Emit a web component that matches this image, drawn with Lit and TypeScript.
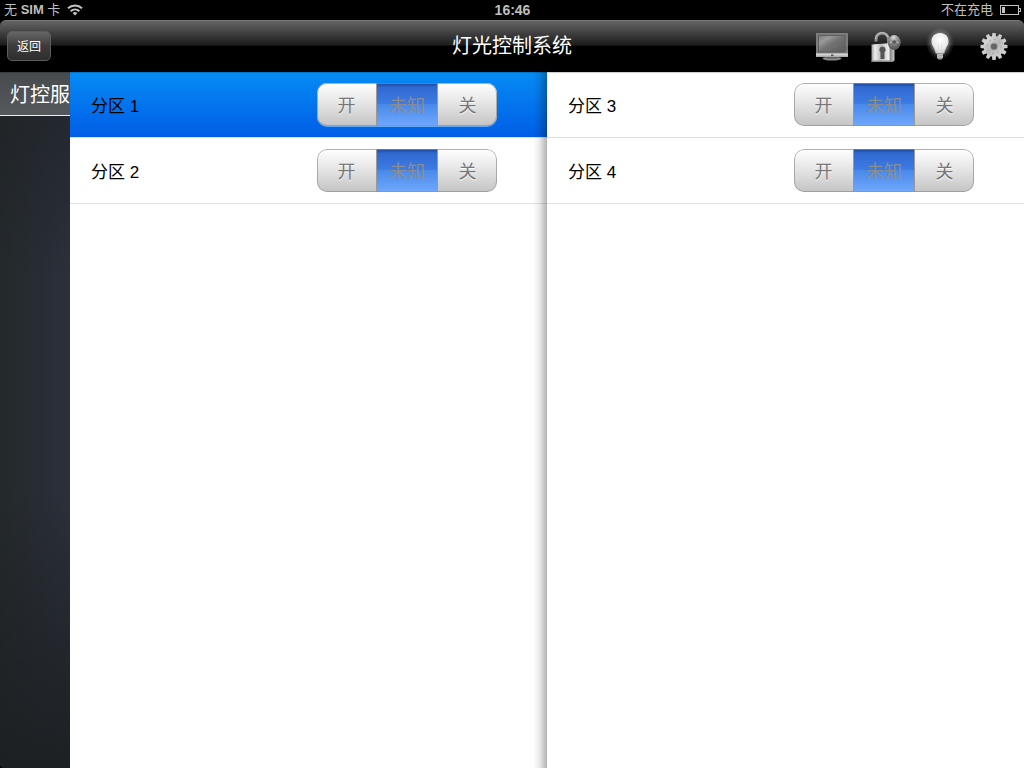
import { LitElement, html, css, svg } from "lit";
import { customElement, property, state } from "lit/decorators.js";
import { classMap } from "lit/directives/class-map.js";

type Mode = "on" | "unknown" | "off";

interface Zone {
  id: number;
  mode: Mode;
}

const MODES: { key: Mode; label: string }[] = [
  { key: "on", label: "开" },
  { key: "unknown", label: "未知" },
  { key: "off", label: "关" },
];

const monitorIcon = svg`
  <defs>
    <linearGradient id="m-screen" x1="0" y1="0" x2="1" y2="1">
      <stop offset="0" stop-color="#7b7b7b" /><stop offset=".25" stop-color="#999" />
      <stop offset=".5" stop-color="#727272" /><stop offset="1" stop-color="#5c5c5c" />
    </linearGradient>
    <linearGradient id="m-bar" x1="0" y1="0" x2="0" y2="1">
      <stop offset="0" stop-color="#e6e6e6" /><stop offset="1" stop-color="#a2a2a2" />
    </linearGradient>
  </defs>
  <ellipse cx="18" cy="30.6" rx="9.5" ry="1.9" fill="#8b8b8b" />
  <path d="M13 28.500h10l1 2h-12z" fill="#5e5e5e" />
  <rect x="2" y="5" width="32" height="24" fill="#7c7c7c" />
  <rect x="4.500" y="7.500" width="26.500" height="16.500" fill="url(#m-screen)" stroke="#5c5c5c" />
  <rect x="32" y="18" width="1" height="4" fill="#626262" />
  <rect x="2" y="25.500" width="32" height="3.500" fill="url(#m-bar)" />
  <rect x="17" y="26.500" width="2.500" height="1.500" fill="#555" />`;

const lockIcon = svg`
  <defs>
    <linearGradient id="l-body" x1="0" y1="0" x2="1" y2="0">
      <stop offset="0" stop-color="#9b9b9b" /><stop offset=".15" stop-color="#eee" />
      <stop offset=".4" stop-color="#bcbcbc" /><stop offset=".75" stop-color="#f0f0f0" />
      <stop offset=".82" stop-color="#8e8e8e" /><stop offset="1" stop-color="#c8c8c8" />
    </linearGradient>
    <radialGradient id="l-ball" cx=".45" cy=".15" r=".8">
      <stop offset="0" stop-color="#dcdcdc" /><stop offset=".4" stop-color="#939393" />
      <stop offset="1" stop-color="#555" />
    </radialGradient>
  </defs>
  <path d="M8 13.500v-2c0-8.500 12-8.500 12.500 0v5" fill="none" stroke="#8d8d8d" stroke-width="3" />
  <path d="M7.500 11c.8-7.500 10.500-8.500 12.500-2" fill="none" stroke="#d2d2d2" stroke-width="1" />
  <path d="M3.500 16.500l20-1.500 3 1.500v16l-2 1.500h-21z" fill="url(#l-body)" />
  <path d="M3.500 32.500h21v1.500h-21z" fill="#8a8a8a" />
  <path d="M14.500 18.500a3.300 3.300 0 0 1 2 5.800v6.700h-4v-6.700a3.300 3.300 0 0 1 2-5.800z" fill="#555" />
  <ellipse cx="26.200" cy="14.500" rx="6.500" ry="7.500" fill="url(#l-ball)" />
  <path d="M22 14.500q4-1.500 8.500 0" fill="none" stroke="#c4c4c4" />
  <ellipse cx="26.200" cy="14" rx="2.200" ry="1.800" fill="#5b5b5b" />`;

const bulbIcon = svg`
  <defs>
    <radialGradient id="b-glow">
      <stop offset=".45" stop-color="#fff" stop-opacity=".55" />
      <stop offset=".75" stop-color="#fff" stop-opacity=".15" />
      <stop offset="1" stop-color="#fff" stop-opacity="0" />
    </radialGradient>
    <radialGradient id="b-glass" cx=".5" cy=".35" r=".7">
      <stop offset="0" stop-color="#fff" /><stop offset=".6" stop-color="#ebebeb" />
      <stop offset="1" stop-color="#c4c4c4" />
    </radialGradient>
  </defs>
  <ellipse cx="18" cy="15.500" rx="14" ry="16" fill="url(#b-glow)" />
  <path d="M18 5c5.200 0 8.500 3.600 8.500 8.200 0 4.600-3.500 6.300-4.200 12.300h-8.600c-.7-6-4.200-7.700-4.200-12.300C9.500 8.600 12.800 5 18 5z" fill="url(#b-glass)" />
  <path d="M16 15.500l1 9.500m3-9.500L19 25" fill="none" stroke="#d8d8d8" stroke-width=".8" />
  <path d="M15 25.500h6v4.500l-1.500 1.500h-3L15 30z" fill="#999" />
  <path d="M15 27.200l6-.7m-6 2.800l6-.7" stroke="#e0e0e0" stroke-width=".8" />`;

const gearIcon = svg`
  <defs>
    <linearGradient id="g-face" x1="0" y1="0" x2="1" y2="1">
      <stop offset="0" stop-color="#e6e6e6" /><stop offset=".5" stop-color="#b8b8b8" />
      <stop offset="1" stop-color="#d8d8d8" />
    </linearGradient>
  </defs>
  ${Array.from({ length: 12 }, (_, i) => svg`
    <path d="M16.400 5h3.200l.7 5h-4.600z" fill="#cdcdcd" transform="rotate(${i * 30} 18 18.500)" />`)}
  <circle cx="18" cy="18.500" r="10.400" fill="url(#g-face)" />
  <circle cx="18" cy="18.500" r="7" fill="none" stroke="#a4a4a4" stroke-width="1" stroke-dasharray="2 3.500" />
  <circle cx="18" cy="18.500" r="4" fill="#a8a8a8" />
  <circle cx="18" cy="18.500" r="3.100" fill="#666" />`;

@customElement("zone-row")
export class ZoneRow extends LitElement {
  @property({ type: Object }) zone!: Zone;
  @property({ type: Boolean, reflect: true }) selected = false;
  @state() private mode: Mode = "unknown";

  static styles = css`
    :host {
      display: flex;
      align-items: center;
      justify-content: space-between;
      box-sizing: border-box;
      height: 66px;
      padding: 0 50px 0 21px;
      border-bottom: 1px solid #e0e0e0;
      background: #fff;
      color: #000;
    }
    :host([selected]) {
      background: linear-gradient(#058cf5, #015de6);
    }
    .name {
      padding-top: 4px;
      font-size: 17px;
      line-height: 24px;
    }
    .segments {
      display: grid;
      grid-template-columns: 59px 62px 59px;
      box-sizing: border-box;
      width: 180px;
      height: 43px;
      border-radius: 10px;
      overflow: hidden;
      position: relative;
      background: linear-gradient(#fff, #e6e6e6 45%, #c4c4c4);
    }
    .segments::after {
      content: "";
      position: absolute;
      inset: 0;
      border: 1px solid #8e8e8eb0;
      border-radius: 10px;
      pointer-events: none;
    }
    :host([selected]) .segments {
      box-shadow: 0 1px 0 #69a8ef;
    }
    .segment {
      margin: 0;
      padding: 0 0 2px;
      border: 0;
      background: none;
      font: inherit;
      font-size: 18px;
      color: #777;
      text-shadow: 0 1px 0 #fff;
    }
    .segment.active {
      border-left: 1px solid #999;
      border-right: 1px solid #999;
      background: linear-gradient(#18469a, #3069d0 10%, #3d7de6 50%, #4989ea 50%, #70a9fc);
      color: #8a8c90;
      text-shadow: none;
    }
  `;

  willUpdate(changed: Map<string, unknown>) {
    if (changed.has("zone")) this.mode = this.zone.mode;
  }

  render() {
    return html`
      <span class="name">分区 ${this.zone.id}</span>
      <div class="segments" role="group" aria-label="分区 ${this.zone.id}">
        ${MODES.map(
          (m) => html`<button
            type="button"
            class=${classMap({ segment: true, active: m.key === this.mode })}
            aria-pressed=${m.key === this.mode}
            @click=${() => (this.mode = m.key)}
          >${m.label}</button>`
        )}
      </div>
    `;
  }
}

@customElement("app-root")
export class AppRoot extends LitElement {
  @state() private selected = 1;

  private columns: Zone[][] = [
    [{ id: 1, mode: "unknown" }, { id: 2, mode: "unknown" }],
    [{ id: 3, mode: "unknown" }, { id: 4, mode: "unknown" }],
  ];

  static styles = css`
    :host {
      display: flex;
      flex-direction: column;
      min-height: 100vh;
      background: #000;
      font-family: "Liberation Sans", "Noto Sans CJK SC", sans-serif;
    }
    .status {
      display: grid;
      grid-template-columns: 1fr auto 1fr;
      align-items: center;
      height: 20px;
      padding: 0 3px 0 4px;
      color: #bfbfbf;
      font-size: 13px;
      line-height: 18px;
    }
    .carrier,
    .power {
      display: flex;
      align-items: center;
      gap: 7px;
    }
    .power {
      justify-content: flex-end;
    }
    .time {
      font-size: 14px;
      font-weight: bold;
    }
    .bar {
      display: grid;
      grid-template-columns: 1fr auto 1fr;
      align-items: center;
      box-sizing: border-box;
      height: 52px;
      padding: 0 3px 2px;
      border-top: 1px solid #777;
      border-radius: 6px 6px 0 0;
      background: linear-gradient(#646464, #1c1c1c 47%, #000 50%);
      box-shadow: 0 1px 1px #0003;
      position: relative;
      z-index: 1;
    }
    .back {
      justify-self: start;
      box-sizing: border-box;
      width: 44px;
      height: 30px;
      margin-left: 4px;
      padding: 0;
      border: 1px solid #5c5c5c;
      border-radius: 5px;
      background: linear-gradient(#666, #3c3c3c 50%, #2e2e2e);
      color: #fff;
      font: inherit;
      font-size: 12px;
    }
    .title {
      margin: 0;
      color: #fff;
      font-size: 20px;
      font-weight: normal;
      line-height: 28px;
    }
    .tools {
      display: flex;
      justify-content: flex-end;
    }
    .tool {
      display: grid;
      place-items: center;
      width: 54px;
      height: 40px;
      padding: 0;
      border: 0;
      background: none;
    }
    .body {
      flex: 1;
      display: grid;
      grid-template-columns: 70px minmax(0, 1fr) minmax(0, 1fr);
    }
    .side {
      overflow: hidden;
      border-bottom-left-radius: 4px;
      background:
        linear-gradient(#1d2125aa, #2b313a00 30%, #2b313a00 60%, #1d2023),
        linear-gradient(90deg, #24292c, #2b303b);
    }
    .server {
      display: block;
      box-sizing: border-box;
      height: 44px;
      padding-left: 10px;
      border-bottom: 1px solid #eee;
      background: linear-gradient(#484b4e, #56595c);
      color: #fff;
      font-size: 20px;
      line-height: 46px;
      text-decoration: none;
      white-space: nowrap;
    }
    .column {
      position: relative;
      background: #fff;
    }
    .column:not(:last-child)::after {
      content: "";
      position: absolute;
      inset: 0 0 0 auto;
      width: 14px;
      background: linear-gradient(90deg, #0000, #00000014 45%, #0000004d);
      pointer-events: none;
    }
  `;

  render() {
    return html`
      <div class="status">
        <span class="carrier">
          <span>无 <b>SIM</b> 卡</span>
          <svg width="16" height="12" viewBox="0 0 16 12" fill="none" stroke="#c4c4c4" stroke-width="2">
            <path d="M1 4.300c4-3.700 10-3.700 14 0M3.600 7.200c2.600-2.300 6.200-2.300 8.800 0" />
            <path d="M8 11.500L5.600 9q2.400-1.800 4.800 0z" fill="#c4c4c4" stroke="none" />
          </svg>
        </span>
        <span class="time">16:46</span>
        <span class="power">
          不在充电
          <svg width="21" height="11" viewBox="0 0 21 11">
            <rect x=".5" y=".5" width="18" height="9" fill="none" stroke="#c4c4c4" />
            <path d="M19 3.500h1.500v3H19" fill="none" stroke="#c4c4c4" />
            <rect x="2" y="2" width="3" height="6" fill="#c4c4c4" />
          </svg>
        </span>
      </div>
      <header class="bar">
        <button class="back" type="button">返回</button>
        <h1 class="title">灯光控制系统</h1>
        <nav class="tools">
          ${[
            ["显示器", monitorIcon],
            ["解锁", lockIcon],
            ["灯光", bulbIcon],
            ["设置", gearIcon],
          ].map(
            ([label, icon]) => html`<button class="tool" type="button" aria-label=${label}>
              <svg width="36" height="36" viewBox="0 0 36 36">${icon}</svg>
            </button>`
          )}
        </nav>
      </header>
      <main class="body">
        <aside class="side"><a class="server" href="#">灯控服</a></aside>
        ${this.columns.map(
          (zones) => html`<section class="column">
            ${zones.map(
              (z) => html`<zone-row
                .zone=${z}
                ?selected=${z.id === this.selected}
                @click=${() => (this.selected = z.id)}
              ></zone-row>`
            )}
          </section>`
        )}
      </main>
    `;
  }
}
